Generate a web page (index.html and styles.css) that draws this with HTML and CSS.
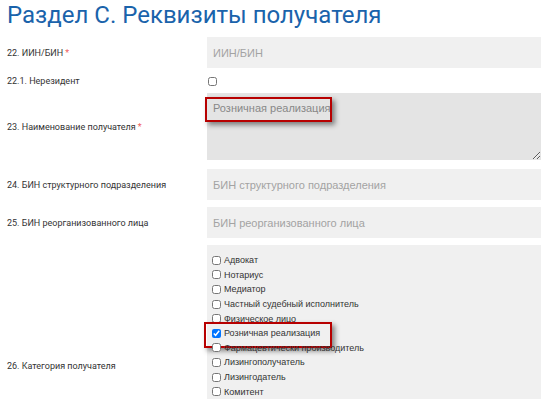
FILE: index.html
```html
<!DOCTYPE html>
<html lang="ru">
<head>
    <meta charset="UTF-8">
    <meta name="viewport" content="width=device-width, initial-scale=1.0">
    <title>Раздел С. Реквизиты получателя</title>
    <link rel="stylesheet" href="styles.css">
</head>
<body>
    <div class="section">
        <h1 class="section-title">Раздел С. Реквизиты получателя</h1>

        <div class="row">
            <label class="row-label">22. ИИН/БИН<span class="req">*</span></label>
            <input class="field" type="text" placeholder="ИИН/БИН">
        </div>

        <div class="row row-check">
            <label class="row-label">22.1. Нерезидент</label>
            <div><input class="check" type="checkbox"></div>
        </div>

        <div class="row row-area">
            <label class="row-label">23. Наименование получателя<span class="req">*</span></label>
            <div class="area-wrap">
                <textarea class="field area">Розничная реализация</textarea>
                <span class="mark mark-area"></span>
            </div>
        </div>

        <div class="row">
            <label class="row-label">24. БИН структурного подразделения</label>
            <input class="field" type="text" placeholder="БИН структурного подразделения">
        </div>

        <div class="row">
            <label class="row-label">25. БИН реорганизованного лица</label>
            <input class="field" type="text" placeholder="БИН реорганизованного лица">
        </div>

        <div class="row">
            <label class="row-label">26. Категория получателя</label>
            <div class="options">
                <label class="option"><input class="check" type="checkbox">Адвокат</label>
                <label class="option"><input class="check" type="checkbox">Нотариус</label>
                <label class="option"><input class="check" type="checkbox">Медиатор</label>
                <label class="option"><input class="check" type="checkbox">Частный судебный исполнитель</label>
                <label class="option"><input class="check" type="checkbox">Физическое лицо</label>
                <label class="option option-marked"><input class="check" type="checkbox" checked>Розничная реализация</label>
                <label class="option"><input class="check" type="checkbox">Фармацевтически производитель</label>
                <label class="option"><input class="check" type="checkbox">Лизингополучатель</label>
                <label class="option"><input class="check" type="checkbox">Лизингодатель</label>
                <label class="option"><input class="check" type="checkbox">Комитент</label>
            </div>
        </div>
    </div>
</body>
</html>
```

FILE: styles.css
```css
* {
    margin: 0;
    padding: 0;
    box-sizing: border-box;
}

body {
    font-family: Roboto, "Liberation Sans", sans-serif;
    background: #fff;
    color: #333;
}

.section {
    padding: 0 7px;
}

.section-title {
    font-size: 24px;
    font-weight: 400;
    line-height: 30px;
    color: #1a63ab;
    margin-bottom: 7px;
}

.row {
    display: grid;
    grid-template-columns: 200px 334px;
    align-items: center;
    margin-bottom: 7px;
}

.row-label {
    font-size: 9px;
    color: #333;
}

.req {
    color: #f06060;
    margin-left: 2px;
}

.field {
    display: block;
    width: 100%;
    height: 31px;
    border: none;
    outline: none;
    background: #f0f0f0;
    padding: 0 6px;
    font-family: "Liberation Sans", Arial, sans-serif;
    font-size: 11px;
    color: #888;
}

.field::placeholder {
    color: #a3a3a3;
}

.row-check {
    height: 12px;
    margin-top: 7px;
    margin-bottom: 6px;
}

.check {
    display: block;
    width: 9px;
    height: 9px;
    margin: 0 0 0 1px;
}

.row-area {
    margin-bottom: 9px;
}

.area-wrap {
    position: relative;
}

.area {
    height: 67px;
    background: #e4e4e4;
    padding: 8px 6px;
    resize: vertical;
    line-height: 14px;
}

.mark {
    position: absolute;
    border: 2px solid #b70000;
    box-shadow: 3px 3px 5px rgba(0, 0, 0, 0.45);
    pointer-events: none;
}

.mark-area {
    left: -2px;
    top: 4px;
    width: 127px;
    height: 25px;
}

.options {
    background: #f0f0f0;
    padding: 8px 5px 88px;
}

.option {
    position: relative;
    display: flex;
    align-items: center;
    height: 14.6px;
    font-family: "Liberation Sans", Arial, sans-serif;
    font-size: 9px;
    color: #333;
}

.option .check {
    margin: 0 3px 0 0;
}

.option-marked::after {
    content: "";
    position: absolute;
    left: -8px;
    top: -4px;
    width: 124px;
    height: 22px;
    border: 2px solid #b70000;
    box-shadow: 3px 3px 5px rgba(0, 0, 0, 0.45);
}
```
